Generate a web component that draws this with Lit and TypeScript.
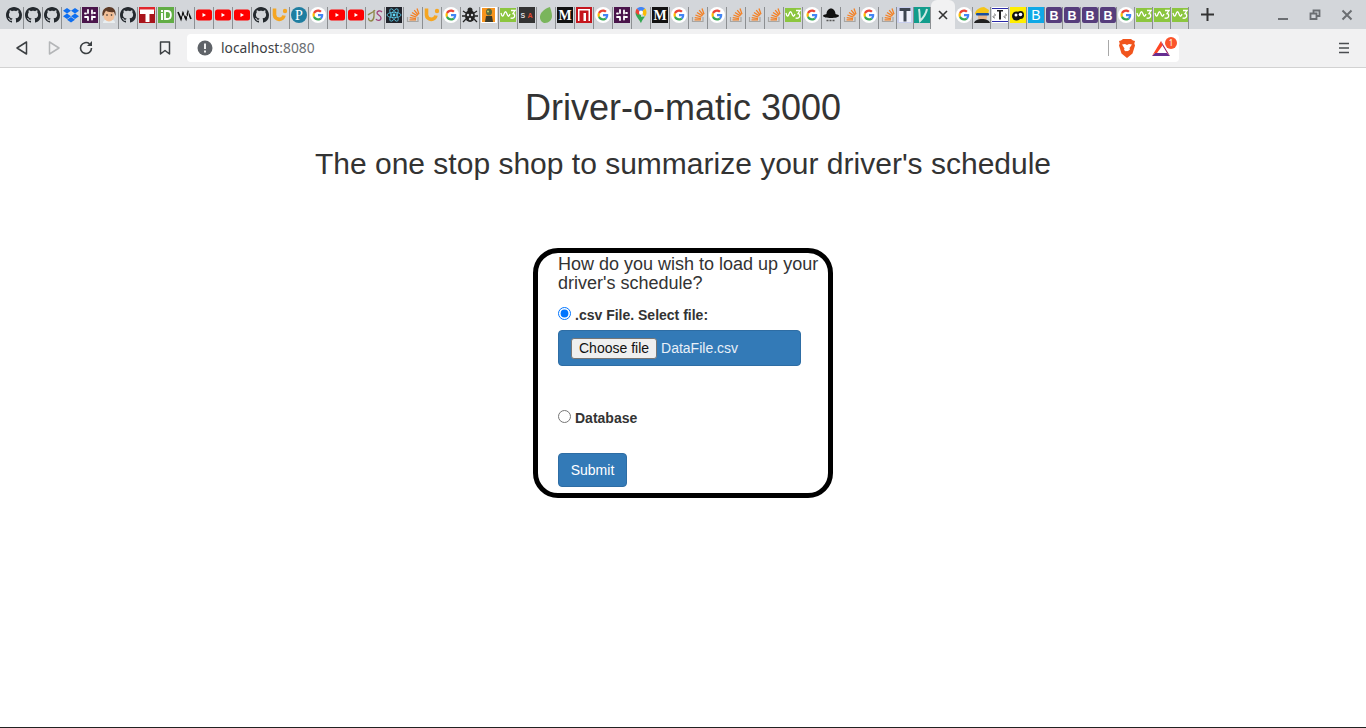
import { LitElement, html, css, svg, TemplateResult } from "lit";
import { customElement } from "lit/decorators.js";

const GITHUB =
  "M8 0C3.58 0 0 3.58 0 8c0 3.54 2.29 6.53 5.47 7.59.4.07.55-.17.55-.38 0-.19-.01-.82-.01-1.49-2.01.37-2.53-.49-2.69-.94-.09-.23-.48-.94-.82-1.13-.28-.15-.68-.52-.01-.53.63-.01 1.08.58 1.23.82.72 1.21 1.87.87 2.33.66.07-.52.28-.87.51-1.07-1.78-.2-3.64-.89-3.64-3.95 0-.87.31-1.59.82-2.15-.08-.2-.36-1.02.08-2.12 0 0 .67-.21 2.2.82.64-.18 1.32-.27 2-.27.68 0 1.36.09 2 .27 1.53-1.04 2.2-.82 2.2-.82.44 1.1.16 1.92.08 2.12.51.56.82 1.27.82 2.15 0 3.07-1.87 3.75-3.65 3.95.29.25.54.73.54 1.48 0 1.07-.01 1.93-.01 2.2 0 .21.15.46.55.38A8.013 8.013 0 0016 8c0-4.42-3.58-8-8-8z";

const WAVE = "M1 6c1 4 2 4 3 1s2-3 3 0 2 3 3 0";

// Favicons, all drawn in a 16x16 box
const ICONS: Record<string, TemplateResult> = {
  github: svg`<path fill="#24292e" d=${GITHUB} />`,
  dropbox: svg`<path fill="#0f6ff0" d="M4 1l4 2.7-4 2.8-4-2.8zM12 1l4 2.7-4 2.8-4-2.8zM4 6.5l4 2.7L4 12 0 9.2zM12 6.5l4 2.7-4 2.8-4-2.8zM4 12.8L8 10l4 2.8-4 2.7z" />`,
  slack: svg`<rect width="16" height="16" fill="#4a154b" />
    <path stroke="#fff" stroke-width="1.8" stroke-linecap="round" d="M6 3v3M10 3.5v3M3 10h3M10 10h3M3 6.5h1M12 6h1M6 10v3M10 9.5v3" />`,
  face: svg`<path fill="#e9eef0" d="M2 16c0-3 3-4 6-4s6 1 6 4z" />
    <ellipse cx="8" cy="8.5" rx="5.5" ry="6" fill="#f2bf98" />
    <path fill="#5d3a26" d="M1.500 9C.5 2 5 0 8.500 0S15.500 3 14.500 9l-1.500-4C10 5.500 6 5 5 3.500 4.500 5 3 5.500 3 8z" />
    <circle cx="6" cy="8" r=".8" fill="#222" /><circle cx="10.500" cy="8" r=".8" fill="#222" />`,
  tred: svg`<rect y="0" width="16" height="16" fill="#a9141b" /><rect y="0" width="16" height="4" fill="#e0262d" />
    <path fill="#fff" d="M1 2.500h14V7h-4.500v8h-4V7H1z" />`,
  idgreen: svg`<rect width="16" height="16" fill="#62ad45" /><rect x="3" y="6" width="2" height="7" fill="#fff" /><rect x="3" y="3" width="2" height="2" fill="#fff" />
    <path fill="none" stroke="#fff" stroke-width="1.800" d="M7 4h2.500c4.500 0 4.500 8 0 8H7z" />`,
  va: svg`<path fill="none" stroke="#111" stroke-width="1.700" d="M1 5l3 7 2-6 3 6 2-7 3 7" />
    <path fill="none" stroke="#fff" stroke-width=".7" d="M3 5l3 6 2-5 3 5 1-6" />`,
  yt: svg`<rect y="2.500" width="16" height="11" rx="2.500" fill="#f00" /><path fill="#fff" d="M6.500 6l3.500 2-3.500 2z" />`,
  u: svg`<path fill="none" stroke="#f5a623" stroke-width="3.600" d="M2.500 1.500v6.500a4.800 4.800 0 0 0 9.500 .5" />
    <circle cx="13" cy="4" r="2.200" fill="#f5a623" />`,
  p: svg`<circle cx="8" cy="8" r="8" fill="#1f7ea1" /><text x="8" y="13" text-anchor="middle" font-family="Liberation Serif" font-size="14" fill="#fff">P</text>`,
  google: svg`<circle cx="8" cy="8" r="8" fill="#fff" />
    <g transform="translate(2.500 2.500) scale(.229)">
      <path fill="#EA4335" d="M24 9.500c3.540 0 6.710 1.220 9.210 3.600l6.850-6.850C35.900 2.380 30.470 0 24 0 14.620 0 6.510 5.380 2.560 13.220l7.980 6.190C12.430 13.720 17.740 9.500 24 9.500z" />
      <path fill="#4285F4" d="M46.980 24.550c0-1.570-.15-3.090-.38-4.550H24v9.020h12.940c-.58 2.960-2.260 5.480-4.780 7.180l7.730 6c4.510-4.180 7.090-10.360 7.090-17.650z" />
      <path fill="#FBBC05" d="M10.530 28.590c-.48-1.450-.76-2.990-.76-4.590s.27-3.140.76-4.590l-7.980-6.190C.92 16.460 0 20.120 0 24c0 3.880.92 7.540 2.560 10.780l7.970-6.190z" />
      <path fill="#34A853" d="M24 48c6.480 0 11.930-2.130 16.030-5.810l-7.730-6c-2.150 1.450-4.920 2.300-8.300 2.300-6.260 0-11.570-4.220-13.470-9.910l-7.980 6.190C6.510 42.620 14.620 48 24 48z" />
    </g>`,
  js: svg`<path fill="none" stroke="#8f8a4a" stroke-width="1.300" d="M1 8c2-2 5-2 7-5M7 3c0 5 1 10-3 11-2 0-3-2-2-3" />
    <path fill="none" stroke="#a3447c" stroke-width="1.300" d="M15 5c-2-2-5-1-5 1s4 2 4 5-4 3-5 1" />`,
  react: svg`<rect width="16" height="16" fill="#20232a" /><circle cx="8" cy="8" r="1.400" fill="#61dafb" />
    <g fill="none" stroke="#61dafb" stroke-width=".7">
      <ellipse cx="8" cy="8" rx="7" ry="2.700" /><ellipse cx="8" cy="8" rx="7" ry="2.700" transform="rotate(60 8 8)" /><ellipse cx="8" cy="8" rx="7" ry="2.700" transform="rotate(120 8 8)" />
    </g>`,
  so: svg`<path fill="none" stroke="#a8a6a3" stroke-width="1.200" d="M2.500 10v4.500h10.500V10" />
    <path fill="none" stroke="#f48024" stroke-width="1.300" d="M4.500 12.800h6.500M4.700 10.600l6.300 1M5.400 8l6 2.200M7 5.500l5.400 3.400M9.200 3.200l4 4.800M12 1.500l2 5.600" />`,
  bug: svg`<g fill="none" stroke="#222" stroke-width="1.300"><path d="M1 4l3 2M15 4l-3 2M0 9h3M16 9h-3M1 15l3-3M15 15l-3-3" /></g>
    <ellipse cx="8" cy="9" rx="5" ry="6" fill="#222" /><circle cx="8" cy="3" r="2.500" fill="#222" />
    <circle cx="6" cy="8" r="1.200" fill="#d3d6da" /><circle cx="10" cy="8" r="1.200" fill="#d3d6da" /><circle cx="8" cy="12" r="1.200" fill="#d3d6da" />`,
  robot: svg`<rect width="16" height="16" fill="#fff" /><rect x="1" y="1" width="13" height="14" fill="#f7941d" />
    <ellipse cx="8" cy="5" rx="3" ry="3.600" fill="#5b6b3e" /><path fill="#3a3a2a" d="M5 9h6l1 6H4z" /><circle cx="7" cy="4.500" r="1" fill="#c8d36a" />`,
  w3: svg`<rect y="1" width="16" height="14" fill="#8cc63f" />
    <path fill="none" stroke="#fff" stroke-width="1.300" d=${WAVE} />
    <path fill="none" stroke="#fff" stroke-width="1.300" d="M11 3.500h4l-2 3c2.500 0 2.500 6-2.500 4.500" />`,
  sa: svg`<rect width="16" height="16" fill="#333" />
    <text x="1.500" y="11" font-family="Liberation Sans" font-weight="700" font-size="7" fill="#ddd">S</text>
    <text x="8.500" y="11" font-family="Liberation Sans" font-weight="700" font-size="7" fill="#e2492f">A</text>`,
  leaf: svg`<path fill="#7ab55c" d="M12 0C6 2 1.500 6 2 11c.3 3 3 5 5 5 4 0 7-3 7-7 0-4-1.500-7-2-9z" />`,
  m: svg`<rect width="16" height="16" fill="#111" /><text x="8" y="13" text-anchor="middle" font-family="Liberation Serif" font-weight="700" font-size="14" fill="#fff">M</text>`,
  npm: svg`<rect width="16" height="16" fill="#c5161d" /><rect x="2" y="2" width="12" height="12" fill="#fff" />
    <path fill="#c5161d" d="M3.500 3.500h9V14H10V6H7.500v8h-4z" />`,
  maps: svg`<path fill="#34a853" d="M8 16C6 12 2.500 9.500 2.500 5.500L8 8z" /><path fill="#ea4335" d="M4 1.500L8 5.500 5 8 2.500 5.500C2.500 4 3 2.500 4 1.500z" />
    <path fill="#4285f4" d="M4 1.500C6 -.5 10 -.5 12 1.500L8 5.500z" /><path fill="#fbbc05" d="M12 1.500c1 1 1.500 2.500 1.500 4 0 1.500-.5 2.500-1.500 4L8 5.500z" />
    <path fill="#34a853" d="M12 9.500C11 11 9 13 8 16L6 10z" /><circle cx="8" cy="5.500" r="2" fill="#fff" />`,
  hat: svg`<path fill="#111" d="M3.500 7c0-3 2-5.500 4.500-5.500S12.500 4 12.500 7c2 .5 3.500 1 3.500 2s-4 2-8 2-8-1-8-2 1.500-1.500 3.500-2z" />
    <path stroke="#555" stroke-width="1.500" stroke-dasharray="2 1" fill="none" d="M3.500 13.500h9" />`,
  tfont: svg`<rect width="16" height="16" fill="#c9cfee" /><rect x="2" y="1" width="12" height="14" fill="#eef0fa" />
    <path fill="#3d4550" d="M2.500 1h11v3h-4v10.500h-3V4h-4z" />`,
  vteal: svg`<rect width="16" height="16" fill="#119c8c" /><path fill="none" stroke="#cfe9e4" stroke-width="2" d="M5 2c1 5 .5 9 1 12C9 11 12 7 13 2" />`,
  glasses: svg`<path fill="#f5c518" d="M1 7C1 3 6 0 10 0l5 3-1 5H3z" /><path fill="#e8b58a" d="M4 6h9v4a4 4 0 0 1-9 0z" />
    <rect x="2" y="6" width="13" height="2.500" rx="1" fill="#1b4fa0" /><path fill="#222" d="M0 16c1-3 4-4 8-4s7 1 8 4z" />`,
  tscale: svg`<rect width="16" height="16" fill="#fff" /><path stroke="#2a2aa8" stroke-width="1" d="M0 1.500h16M0 14.500h16" />
    <path fill="#222" d="M5 3h6v1.500H9v8H7v-8H5z" /><path stroke="#555" stroke-width=".8" fill="none" d="M2 7c2 0 2 2 0 2s-1 2 1 2M13 7c2 0 2 2 0 2s-1 2 1 2" />`,
  yellow: svg`<rect width="16" height="16" fill="#ffee00" /><ellipse cx="6.500" cy="9" rx="4.500" ry="4.500" fill="#111" />
    <ellipse cx="10.500" cy="8" rx="3.500" ry="4" fill="#111" /><circle cx="10.500" cy="7.500" r="1.800" fill="#fff" /><circle cx="6" cy="8" r="1.500" fill="#fff" />`,
  bcyan: svg`<rect width="16" height="16" fill="#0fa8e6" /><text x="8" y="13" text-anchor="middle" font-family="Liberation Sans" font-size="14" fill="#fff">B</text>`,
  b: svg`<rect width="16" height="16" rx="2" fill="#563d7c" /><text x="8" y="12.500" text-anchor="middle" font-family="Liberation Sans" font-weight="700" font-size="12.500" fill="#fff">B</text>`,
};

// 46 full width tabs, then the ones that get squeezed next to the active tab
const LEFT_TABS =
  "github github github dropbox slack face github tred idgreen va yt yt yt github u p google yt yt js react so u google bug robot w3 sa leaf m npm google slack maps m google so google so so so w3 google hat so google".split(
    " ",
  );
const SQUEEZED_TABS = ["tfont", "vteal"];
const RIGHT_TABS =
  "google glasses tscale yellow bcyan b b b b google w3 w3 w3".split(" ");

const favicon = (name: string) =>
  html`<svg class="fav" viewBox="0 0 16 16">${ICONS[name]}</svg>`;

@customElement("browser-chrome")
export class BrowserChrome extends LitElement {
  static styles = css`
    :host {
      display: block;
      font-family: "Noto Sans", sans-serif;
    }
    .strip {
      display: flex;
      align-items: flex-start;
      height: 29px;
      padding-left: 5px;
      background: #d3d6da;
      box-sizing: border-box;
    }
    .tab {
      display: flex;
      justify-content: center;
      flex: none;
      box-sizing: border-box;
      height: 22px;
      margin-top: 7px;
      border-right: 1px solid #8c8f92;
    }
    .tab.wide {
      width: 19px;
    }
    .tab.squeezed {
      width: 17px;
    }
    .tab.narrow {
      width: 18px;
    }
    .fav {
      display: block;
      width: 16px;
      height: 16px;
      flex: none;
    }
    .active {
      display: flex;
      align-items: center;
      justify-content: center;
      flex: none;
      width: 24px;
      height: 29px;
      background: #f1f1f2;
      border-radius: 6px 6px 0 0;
    }
    .plus {
      margin: 8px 0 0 12px;
    }
    .window {
      display: flex;
      margin-left: auto;
      margin-right: 10px;
      margin-top: 7px;
      gap: 14px;
    }
    .window svg {
      display: block;
    }
    .toolbar {
      display: flex;
      align-items: center;
      height: 38px;
      background: #f1f1f2;
      border-bottom: 1px solid #d2d2d2;
      box-sizing: content-box;
    }
    .nav {
      display: block;
      flex: none;
    }
    .back {
      margin-left: 14px;
    }
    .forward {
      margin-left: 16px;
    }
    .reload {
      margin-left: 16px;
    }
    .bookmark {
      margin-left: 63px;
    }
    .omnibox {
      display: flex;
      align-items: center;
      width: 992px;
      height: 28px;
      margin-left: 14px;
      padding: 0 9px 0 10px;
      background: #fff;
      border-radius: 4px;
      flex: none;
      box-sizing: border-box;
    }
    .url {
      margin-left: 8px;
      font-size: 13.8px;
      color: #3c4043;
    }
    .port {
      color: #6b6f73;
    }
    .divider {
      flex: none;
      width: 1px;
      height: 16px;
      margin-left: auto;
      background: #a8a8a8;
    }
    .brave {
      margin-left: 9px;
    }
    .rewards {
      position: relative;
      flex: none;
      width: 18px;
      height: 15px;
      margin-left: 16px;
    }
    .badge {
      position: absolute;
      top: -4px;
      right: -7px;
      width: 12px;
      height: 12px;
      border-radius: 50%;
      background: #fb542b;
      color: #fff;
      font-size: 8px;
      line-height: 12px;
      text-align: center;
    }
    .menu {
      margin-left: 159px;
    }
  `;

  render() {
    return html`
      <div class="strip">
        ${LEFT_TABS.map((t) => html`<div class="tab wide">${favicon(t)}</div>`)}
        <div class="tab narrow">${favicon("so")}</div>
        ${SQUEEZED_TABS.map(
          (t) => html`<div class="tab squeezed">${favicon(t)}</div>`,
        )}
        <div class="active">
          <svg width="10" height="10" viewBox="0 0 10 10">
            <path stroke="#333" stroke-width="1.600" d="M1 1l8 8M9 1l-8 8" />
          </svg>
        </div>
        ${RIGHT_TABS.map(
          (t) => html`<div class="tab narrow">${favicon(t)}</div>`,
        )}
        <svg class="plus" width="13" height="13" viewBox="0 0 13 13">
          <path stroke="#333" stroke-width="2" d="M6.500 0v13M0 6.500h13" />
        </svg>
        <div class="window">
          <svg width="18" height="16" viewBox="0 0 18 16">
            <path stroke="#6b6e72" stroke-width="2" d="M4 12h10" />
          </svg>
          <svg width="18" height="16" viewBox="0 0 18 16">
            <path
              fill="none"
              stroke="#6b6e72"
              stroke-width="1.800"
              d="M7.500 6V3.500h6V9H11M4.500 6.500H10.500V12H4.500z"
            />
          </svg>
          <svg width="18" height="16" viewBox="0 0 18 16">
            <path
              stroke="#6b6e72"
              stroke-width="2"
              d="M4.500 3.500l9 9M13.500 3.500l-9 9"
            />
          </svg>
        </div>
      </div>
      <div class="toolbar">
        <svg class="nav back" width="16" height="16" viewBox="0 0 16 16">
          <path
            fill="none"
            stroke="#3c4043"
            stroke-width="1.500"
            stroke-linejoin="round"
            d="M12.500 2v12L3 8z"
          />
        </svg>
        <svg class="nav forward" width="16" height="16" viewBox="0 0 16 16">
          <path
            fill="none"
            stroke="#b4b6b8"
            stroke-width="1.500"
            stroke-linejoin="round"
            d="M3.500 2v12L13 8z"
          />
        </svg>
        <svg class="nav reload" width="16" height="16" viewBox="0 0 16 16">
          <path
            fill="none"
            stroke="#3c4043"
            stroke-width="1.600"
            d="M13.500 8A5.500 5.500 0 1 1 11.500 3.800"
          />
          <path fill="#3c4043" d="M14 1v5H9z" />
        </svg>
        <svg class="nav bookmark" width="16" height="16" viewBox="0 0 16 16">
          <path
            fill="none"
            stroke="#3c4043"
            stroke-width="1.500"
            stroke-linejoin="round"
            d="M3.500 2h9v12L8 10.500 3.500 14z"
          />
        </svg>
        <div class="omnibox">
          <svg class="nav" width="16" height="16" viewBox="0 0 16 16">
            <circle cx="8" cy="8" r="7.500" fill="#5f6368" />
            <path stroke="#fff" stroke-width="1.800" d="M8 3.500v5.500M8 10.500v2" />
          </svg>
          <span class="url">localhost<span class="port">:8080</span></span>
          <div class="divider"></div>
          <svg class="nav brave" width="18" height="20" viewBox="0 0 18 20">
            <path
              fill="#f1551d"
              d="M5 1h8l2 1.500 2 .5-.7 2.500.7 2-2.500 8L9 20l-5.500-4.500L1 7.500l.7-2L1 3l2-.5z"
            />
            <path
              fill="#fff"
              d="M4 6.500L7 6l2 1 2-1 3 .5-2.500 3.500.5 1.500-2 1.500L9 14l-1-.500-2-1.500.5-1.500z"
            />
            <path fill="#f1551d" d="M7.500 13h3L9 14.500z" />
          </svg>
          <div class="rewards">
            <svg class="nav" width="18" height="15" viewBox="0 0 18 15">
              <path fill="#662d91" d="M0 15h18l-3-3H3z" />
              <path fill="#ff4724" d="M0 15L9 0l1.500 4.500L5 12H3z" />
              <path fill="#9e1f63" d="M9 0l9 15-3-3-4.500-7.500z" />
            </svg>
            <span class="badge">1</span>
          </div>
        </div>
        <svg class="nav menu" width="12" height="12" viewBox="0 0 12 12">
          <path
            stroke="#4a4d50"
            stroke-width="1.500"
            d="M1 1.500h10M1 6h10M1 10.500h10"
          />
        </svg>
      </div>
    `;
  }
}

@customElement("app-root")
export class AppRoot extends LitElement {
  static styles = css`
    :host {
      display: flex;
      flex-direction: column;
      height: 728px;
      font-family: "Liberation Sans", Arial, sans-serif;
      font-size: 14px;
      line-height: 20px;
      color: #333;
      background: #fff;
      box-sizing: border-box;
      border-bottom: 1px solid #222;
      overflow: hidden;
    }
    main {
      flex: 1;
      display: flex;
      flex-direction: column;
      align-items: center;
    }
    h1,
    h2,
    h3 {
      margin: 0;
      font-weight: 500;
      line-height: 1.1;
    }
    h1 {
      margin-top: 20px;
      font-size: 36px;
    }
    h2 {
      margin-top: 19px;
      font-size: 30px;
    }
    form {
      display: flex;
      flex-direction: column;
      align-items: flex-start;
      box-sizing: border-box;
      width: 300px;
      height: 250px;
      margin-top: 68px;
      padding: 2px 0 0 20px;
      border: 5px solid #000;
      border-radius: 25px;
    }
    h3 {
      font-size: 18px;
    }
    .choice {
      display: flex;
      align-items: center;
      font-weight: 700;
    }
    .choice input {
      width: 13px;
      height: 13px;
      margin: 0 4px 0 0;
      position: relative;
      top: -2px;
    }
    .csv {
      margin-top: 11px;
    }
    .db {
      margin-top: 42px;
    }
    .file {
      display: flex;
      align-items: center;
      box-sizing: border-box;
      width: 243px;
      height: 36px;
      margin-top: 5px;
      padding-left: 12px;
      color: #fff;
      background: #337ab7;
      border: 1px solid #2e6da4;
      border-radius: 4px;
    }
    .pick {
      height: 21px;
      padding: 0 7px;
      margin-right: 4px;
      font: 14px "Liberation Sans", Arial, sans-serif;
      color: #111;
      background: #efefef;
      border: 1px solid #767676;
      border-radius: 3px;
    }
    .file span {
      color: #e8f0f8;
    }
    .submit {
      width: 69px;
      height: 34px;
      margin-top: 25px;
      padding: 0;
      font: 14px "Liberation Sans", Arial, sans-serif;
      color: #fff;
      background: #337ab7;
      border: 1px solid #2e6da4;
      border-radius: 4px;
    }
  `;

  render() {
    return html`
      <browser-chrome></browser-chrome>
      <main>
        <h1>Driver-o-matic 3000</h1>
        <h2>The one stop shop to summarize your driver's schedule</h2>
        <form @submit=${(e: Event) => e.preventDefault()}>
          <h3>How do you wish to load up your driver's schedule?</h3>
          <label class="choice csv">
            <input type="radio" name="source" checked />.csv File. Select file:
          </label>
          <div class="file">
            <button class="pick" type="button">Choose file</button>
            <span>DataFile.csv</span>
          </div>
          <label class="choice db">
            <input type="radio" name="source" />Database
          </label>
          <button class="submit" type="submit">Submit</button>
        </form>
      </main>
    `;
  }
}
